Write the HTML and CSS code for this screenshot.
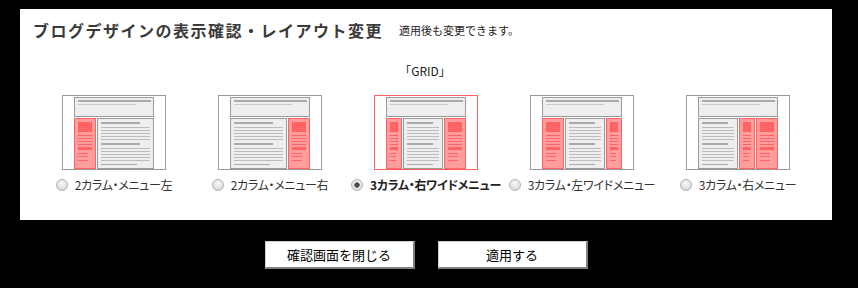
FILE: index.html
```html
<!DOCTYPE html>
<html lang="ja">
<head>
<meta charset="utf-8">
<title>ブログデザインの表示確認</title>
<link rel="stylesheet" href="styles.css">
</head>
<body>
<svg class="defs" width="0" height="0" aria-hidden="true">
  <defs>
    <symbol id="hdr" viewBox="0 0 80 20">
      <rect x="0.5" y="0.5" width="79" height="19" fill="#eeeeee" stroke="#9a9a9a"/>
      <rect x="4" y="3" width="73" height="2" fill="#aaaaaa"/>
      <rect x="4" y="7" width="58" height="1" fill="#c8c8c8"/>
    </symbol>
    <symbol id="side-w" viewBox="0 0 22 51">
      <rect x="0.5" y="0.5" width="21" height="50" fill="#ff9c9c" stroke="#ff6464"/>
      <rect x="4" y="4" width="14" height="10" fill="#ff6464"/>
      <rect x="4" y="17" width="14" height="1" fill="#ff6464"/>
      <rect x="4" y="20" width="14" height="1" fill="#ff6464"/>
      <rect x="4" y="23" width="14" height="1" fill="#ff6464"/>
      <rect x="4" y="26" width="14" height="1" fill="#ff6464"/>
      <rect x="4" y="29" width="14" height="3" fill="#ff6464"/>
      <rect x="4" y="35" width="10" height="1" fill="#ff6464"/>
      <rect x="4" y="38" width="10" height="1" fill="#ff6464"/>
      <rect x="4" y="42" width="10" height="1" fill="#ff6464"/>
    </symbol>
    <symbol id="side-n" viewBox="0 0 16 51">
      <rect x="0.5" y="0.5" width="15" height="50" fill="#ff9c9c" stroke="#ff6464"/>
      <rect x="4" y="4" width="8" height="10" fill="#ff6464"/>
      <rect x="4" y="17" width="8" height="1" fill="#ff6464"/>
      <rect x="4" y="20" width="8" height="1" fill="#ff6464"/>
      <rect x="4" y="23" width="8" height="1" fill="#ff6464"/>
      <rect x="4" y="26" width="8" height="1" fill="#ff6464"/>
      <rect x="4" y="29" width="8" height="3" fill="#ff6464"/>
      <rect x="4" y="35" width="6" height="1" fill="#ff6464"/>
      <rect x="4" y="38" width="6" height="1" fill="#ff6464"/>
      <rect x="4" y="42" width="6" height="1" fill="#ff6464"/>
    </symbol>
    <symbol id="main-w" viewBox="0 0 57 51">
      <rect x="0.5" y="0.5" width="56" height="50" fill="#eeeeee" stroke="#9a9a9a"/>
      <rect x="4" y="4" width="39" height="2" fill="#aaaaaa"/>
      <rect x="4" y="9" width="49" height="1" fill="#bcbcbc"/>
      <rect x="4" y="12" width="49" height="1" fill="#bcbcbc"/>
      <rect x="4" y="15" width="49" height="1" fill="#bcbcbc"/>
      <rect x="4" y="18" width="49" height="1" fill="#bcbcbc"/>
      <rect x="4" y="21" width="49" height="1" fill="#bcbcbc"/>
      <rect x="4" y="25" width="39" height="2" fill="#aaaaaa"/>
      <rect x="4" y="30" width="49" height="1" fill="#bcbcbc"/>
      <rect x="4" y="33" width="49" height="1" fill="#bcbcbc"/>
      <rect x="4" y="36" width="49" height="1" fill="#bcbcbc"/>
      <rect x="4" y="39" width="49" height="1" fill="#bcbcbc"/>
      <rect x="4" y="42" width="49" height="1" fill="#bcbcbc"/>
      <rect x="4" y="46" width="36" height="1" fill="#aaaaaa"/>
    </symbol>
    <symbol id="main-n" viewBox="0 0 40 51">
      <rect x="0.5" y="0.5" width="39" height="50" fill="#eeeeee" stroke="#9a9a9a"/>
      <rect x="4" y="4" width="26" height="2" fill="#aaaaaa"/>
      <rect x="4" y="9" width="32" height="1" fill="#bcbcbc"/>
      <rect x="4" y="12" width="32" height="1" fill="#bcbcbc"/>
      <rect x="4" y="15" width="32" height="1" fill="#bcbcbc"/>
      <rect x="4" y="18" width="32" height="1" fill="#bcbcbc"/>
      <rect x="4" y="21" width="32" height="1" fill="#bcbcbc"/>
      <rect x="4" y="25" width="26" height="2" fill="#aaaaaa"/>
      <rect x="4" y="30" width="32" height="1" fill="#bcbcbc"/>
      <rect x="4" y="33" width="32" height="1" fill="#bcbcbc"/>
      <rect x="4" y="36" width="32" height="1" fill="#bcbcbc"/>
      <rect x="4" y="39" width="32" height="1" fill="#bcbcbc"/>
      <rect x="4" y="42" width="32" height="1" fill="#bcbcbc"/>
      <rect x="4" y="46" width="26" height="1" fill="#aaaaaa"/>
    </symbol>
  </defs>
</svg>

<div class="panel">
  <div class="head">
    <h1 class="title">ブログデザインの表示確認・レイアウト変更</h1>
    <span class="note">適用後も変更できます。</span>
  </div>
  <p class="theme">「GRID」</p>
  <ul class="layouts">
    <li class="layout">
      <svg class="thumb" viewBox="0 0 104 75">
        <rect x="0.5" y="0.5" width="103" height="74" fill="#fff" stroke="#9a9a9a"/>
        <use href="#hdr" x="12" y="2" width="80" height="20"/>
        <use href="#side-w" x="12" y="23" width="22" height="51"/>
        <use href="#main-w" x="35" y="23" width="57" height="51"/>
      </svg>
      <label class="opt"><input type="radio" name="layout"><span>2カラム・メニュー左</span></label>
    </li>
    <li class="layout">
      <svg class="thumb" viewBox="0 0 104 75">
        <rect x="0.5" y="0.5" width="103" height="74" fill="#fff" stroke="#9a9a9a"/>
        <use href="#hdr" x="12" y="2" width="80" height="20"/>
        <use href="#main-w" x="12" y="23" width="57" height="51"/>
        <use href="#side-w" x="70" y="23" width="22" height="51"/>
      </svg>
      <label class="opt"><input type="radio" name="layout"><span>2カラム・メニュー右</span></label>
    </li>
    <li class="layout">
      <svg class="thumb" viewBox="0 0 104 75">
        <rect x="0.5" y="0.5" width="103" height="74" fill="#fff" stroke="#ff6464"/>
        <use href="#hdr" x="12" y="2" width="80" height="20"/>
        <use href="#side-n" x="12" y="23" width="16" height="51"/>
        <use href="#main-n" x="29" y="23" width="40" height="51"/>
        <use href="#side-w" x="70" y="23" width="22" height="51"/>
      </svg>
      <label class="opt"><input type="radio" name="layout" checked><span>3カラム・右ワイドメニュー</span></label>
    </li>
    <li class="layout">
      <svg class="thumb" viewBox="0 0 104 75">
        <rect x="0.5" y="0.5" width="103" height="74" fill="#fff" stroke="#9a9a9a"/>
        <use href="#hdr" x="12" y="2" width="80" height="20"/>
        <use href="#side-w" x="12" y="23" width="22" height="51"/>
        <use href="#main-n" x="35" y="23" width="40" height="51"/>
        <use href="#side-n" x="76" y="23" width="16" height="51"/>
      </svg>
      <label class="opt"><input type="radio" name="layout"><span>3カラム・左ワイドメニュー</span></label>
    </li>
    <li class="layout">
      <svg class="thumb" viewBox="0 0 104 75">
        <rect x="0.5" y="0.5" width="103" height="74" fill="#fff" stroke="#9a9a9a"/>
        <use href="#hdr" x="12" y="2" width="80" height="20"/>
        <use href="#main-n" x="12" y="23" width="40" height="51"/>
        <use href="#side-n" x="53" y="23" width="16" height="51"/>
        <use href="#side-w" x="70" y="23" width="22" height="51"/>
      </svg>
      <label class="opt"><input type="radio" name="layout"><span>3カラム・右メニュー</span></label>
    </li>
  </ul>
</div>

<div class="actions">
  <button class="btn" type="button">確認画面を閉じる</button>
  <button class="btn" type="button">適用する</button>
</div>
</body>
</html>
```

FILE: styles.css
```css
body {
  margin: 0;
  background: #000;
  font-family: "Noto Sans CJK JP", "Noto Sans", sans-serif;
}

.defs {
  display: block;
  width: 0;
  height: 0;
  overflow: hidden;
}

.panel {
  margin: 9px 0 0 20px;
  width: 812px;
  height: 211px;
  background: #fff;
  box-sizing: border-box;
}

.head {
  display: flex;
  align-items: center;
  height: 42px;
  padding-left: 13px;
}

.title {
  margin: 0;
  font-size: 16px;
  font-weight: bold;
  letter-spacing: 1.5px;
  line-height: 20px;
  color: #3a3a3a;
}

.note {
  margin-left: 16px;
  font-size: 11px;
  line-height: 16px;
  color: #222;
}

.theme {
  margin: 12px 0 0;
  padding-right: 2px;
  text-align: center;
  font-size: 12px;
  line-height: 16px;
  color: #222;
}

.layouts {
  list-style: none;
  margin: 16px 0 0;
  padding: 0 16px;
  display: grid;
  grid-template-columns: repeat(5, 156px);
}

.layout {
  display: flex;
  flex-direction: column;
  align-items: center;
}

.thumb {
  display: block;
  width: 104px;
  height: 75px;
}

.opt {
  display: flex;
  align-items: center;
  gap: 7px;
  margin-top: 7px;
  height: 16px;
  font-size: 12px;
  line-height: 16px;
  letter-spacing: -0.3px;
  color: #333;
  white-space: nowrap;
  font-feature-settings: "palt";
}

.opt input {
  appearance: none;
  -webkit-appearance: none;
  margin: 0;
  width: 12px;
  height: 12px;
  flex: none;
  box-sizing: border-box;
  border-radius: 50%;
  border: 1px solid #b4b4b4;
  background: radial-gradient(circle at 50% 35%, #f8f8f8, #d2d2d2);
}

.opt input:checked {
  background:
    radial-gradient(circle, #4a4a4a 0 2.3px, transparent 3px),
    radial-gradient(circle at 50% 35%, #f8f8f8, #d2d2d2);
}

.opt input:checked + span {
  font-weight: bold;
  color: #222;
}

.actions {
  margin: 21px 0 0 20px;
  width: 812px;
  display: flex;
  justify-content: center;
  gap: 23px;
}

.btn {
  width: 150px;
  height: 28px;
  box-sizing: border-box;
  padding: 0;
  background: #fff;
  border-style: solid;
  border-width: 1px 2px 2px 1px;
  border-color: #d0d0d0 #808080 #808080 #d0d0d0;
  font-family: "Noto Sans CJK JP", sans-serif;
  font-size: 13px;
  color: #000;
}
```
